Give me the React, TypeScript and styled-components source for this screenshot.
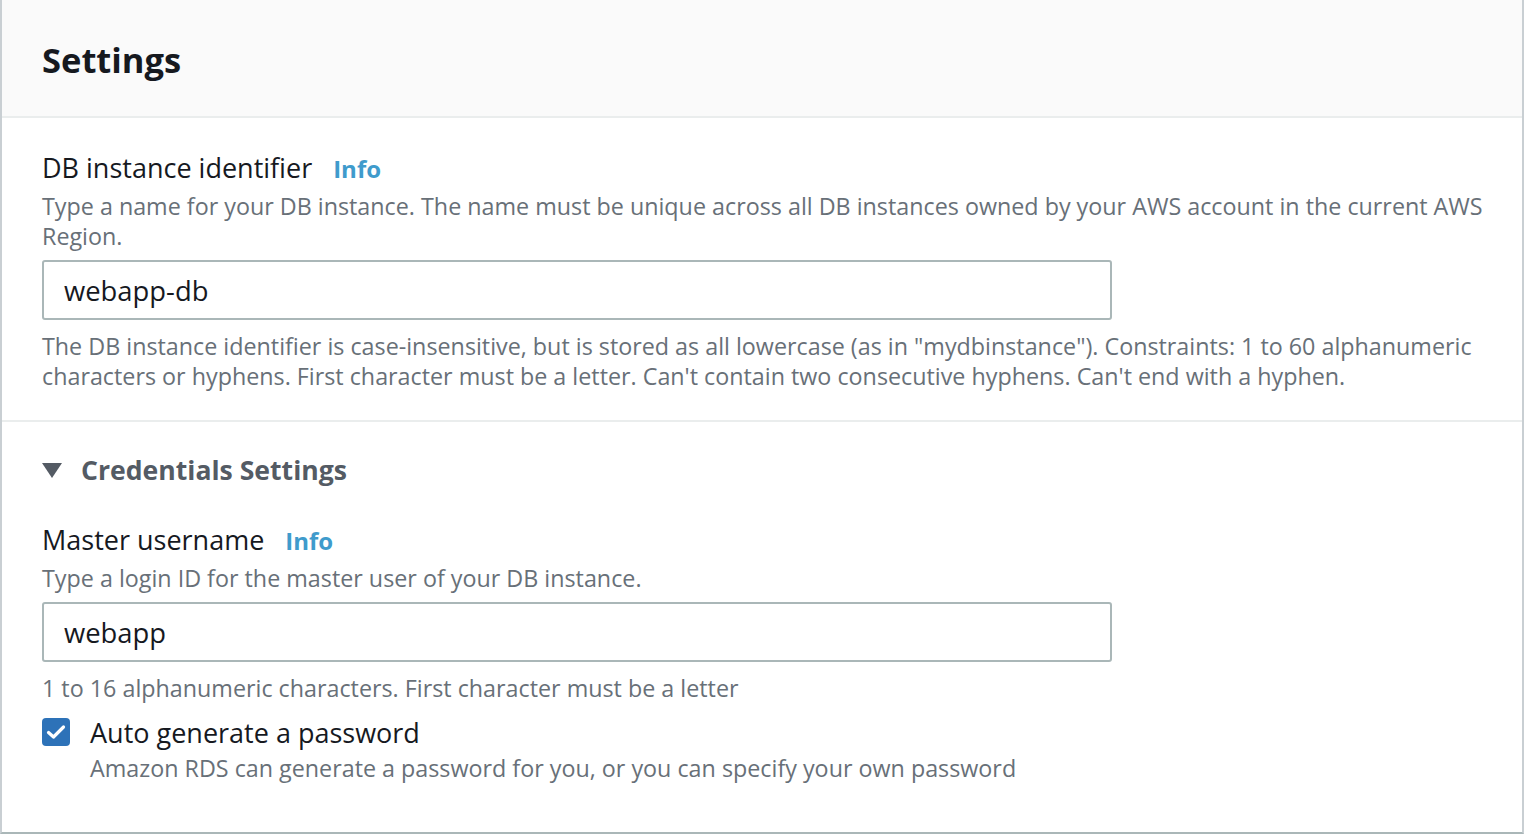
import React from "react";
import styled, { createGlobalStyle } from "styled-components";

const Global = createGlobalStyle`
  html, body { margin: 0; padding: 0; background: #ffffff; }
  body { font-family: "Open Sans", "Noto Sans", Arial, sans-serif; }
  * { box-sizing: border-box; }
`;

const Panel = styled.div`
  width: 1524px;
  height: 834px;
  border-left: 2px solid #c9cfd3;
  border-right: 2px solid #c9cfd3;
  border-bottom: 2px solid #aab7b8;
  background: #ffffff;
  overflow: hidden;
`;

const Header = styled.div`
  height: 118px;
  background: #fafafa;
  border-bottom: 2px solid #eaeded;
  padding: 37px 40px 0;
`;

const Title = styled.h2`
  margin: 0;
  font-size: 34.5px;
  line-height: 46px;
  font-weight: 700;
  color: #16191f;
`;

const Section = styled.div<{ $top: number; $bottom: number; $divider?: boolean }>`
  padding: ${(p) => p.$top}px 30px ${(p) => p.$bottom}px 40px;
  border-bottom: ${(p) => (p.$divider ? "2px solid #eaeded" : "none")};
`;

const LabelRow = styled.div<{ $gap?: number }>`
  display: flex;
  align-items: baseline;
  gap: 21px;
  line-height: 36px;
  margin-top: ${(p) => p.$gap ?? 0}px;
  margin-bottom: 4px;
`;

const Label = styled.span`
  font-size: 27px;
  color: #16191f;
`;

const InfoLink = styled.a`
  font-size: 24px;
  font-weight: 700;
  color: #3f9bcc;
  text-decoration: none;
`;

const Desc = styled.div<{ $mt?: number }>`
  font-size: 23.3px;
  line-height: 30px;
  color: #687078;
  margin-top: ${(p) => p.$mt ?? 0}px;
`;

const Input = styled.div`
  width: 1070px;
  height: 60px;
  border: 2px solid #aab7b8;
  border-radius: 3px;
  display: flex;
  align-items: center;
  padding: 0 20px;
  font-size: 27.4px;
  color: #16191f;
  margin: 9px 0 11px;
`;

const ExpanderRow = styled.div`
  display: flex;
  align-items: center;
  gap: 19px;
  height: 40px;
`;

const ExpanderTitle = styled.span`
  font-size: 26.6px;
  font-weight: 700;
  color: #545b64;
`;

const CheckRow = styled.div`
  display: grid;
  grid-template-columns: 28px 1fr;
  column-gap: 20px;
  margin-top: 12px;
`;

const Box = styled.div`
  width: 28px;
  height: 28px;
  border-radius: 4px;
  background: #2d72b8;
  display: flex;
  align-items: center;
  justify-content: center;
  margin-top: 3px;
`;

const CheckLabel = styled.div`
  font-size: 27px;
  line-height: 36px;
  color: #16191f;
`;

const ConstraintDesc = styled(Desc)`
  max-width: 1440px;
`;

export default function App() {
  return (
    <>
      <Global />
      <Panel>
        <Header>
          <Title>Settings</Title>
        </Header>
        <Section $top={32} $bottom={29} $divider>
          <LabelRow>
            <Label>DB instance identifier</Label>
            <InfoLink>Info</InfoLink>
          </LabelRow>
          <Desc>
            Type a name for your DB instance. The name must be unique across all DB instances owned by your AWS
            account in the current AWS Region.
          </Desc>
          <Input>webapp-db</Input>
          <ConstraintDesc>
            The DB instance identifier is case-insensitive, but is stored as all lowercase (as in "mydbinstance").
            Constraints: 1 to 60 alphanumeric characters or hyphens. First character must be a letter. Can't contain
            two consecutive hyphens. Can't end with a hyphen.
          </ConstraintDesc>
        </Section>
        <Section $top={28} $bottom={0}>
          <ExpanderRow>
            <svg width="20" height="15" viewBox="0 0 20 15">
              <polygon points="0,0 20,0 10,15" fill="#545b64" />
            </svg>
            <ExpanderTitle>Credentials Settings</ExpanderTitle>
          </ExpanderRow>
          <LabelRow $gap={32}>
            <Label>Master username</Label>
            <InfoLink>Info</InfoLink>
          </LabelRow>
          <Desc>Type a login ID for the master user of your DB instance.</Desc>
          <Input>webapp</Input>
          <Desc>1 to 16 alphanumeric characters. First character must be a letter</Desc>
          <CheckRow>
            <Box>
              <svg width="20" height="16" viewBox="0 0 20 16">
                <path d="M2.5 8.5 L7.5 13 L17.5 3" stroke="#fff" strokeWidth="3.2" fill="none" strokeLinecap="round" strokeLinejoin="round" />
              </svg>
            </Box>
            <div>
              <CheckLabel>Auto generate a password</CheckLabel>
              <Desc $mt={2}>Amazon RDS can generate a password for you, or you can specify your own password</Desc>
            </div>
          </CheckRow>
        </Section>
      </Panel>
    </>
  );
}
